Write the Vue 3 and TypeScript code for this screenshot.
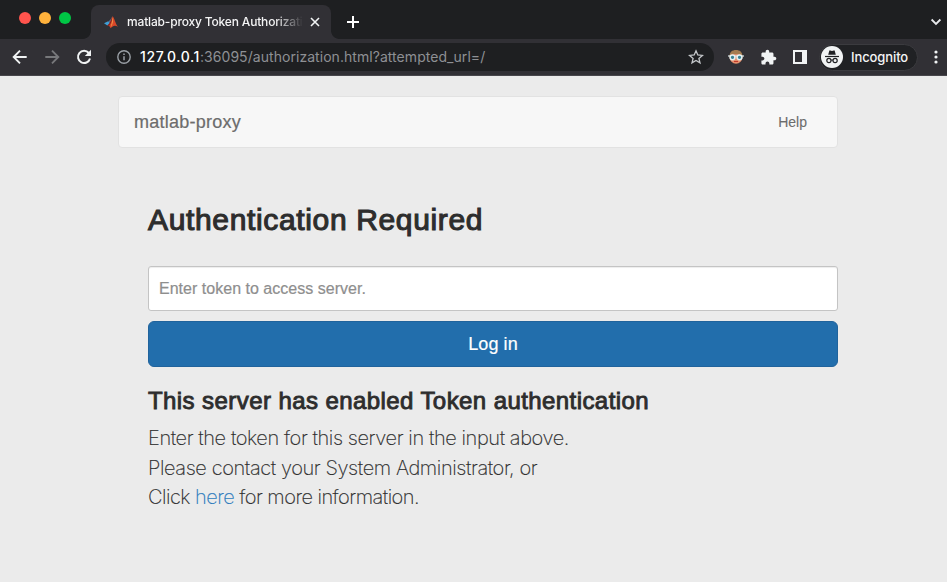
<script setup lang="ts">
import { ref } from 'vue'

const token = ref('')
const tabTitle = 'matlab-proxy Token Authorizati'
const lights = ['red', 'amber', 'green']
</script>

<template>
  <div class="window">
    <header class="tabs">
      <div class="lights">
        <i v-for="c in lights" :key="c" :class="c"></i>
      </div>
      <div class="tab">
        <svg class="logo" width="16" height="16" viewBox="0 0 16 16">
          <path d="M1 9.3 5.2 7.3 7 9.2 4.3 11.4Z" fill="#3f9fd6" />
          <path d="M5.2 7.3C7.4 6.8 7.6 4.5 9.5 2.3L7 9.2Z" fill="#4f6f9a" />
          <path d="M4.3 11.4C6.4 10.5 7.7 6 9.6 2.2 11.3 3.5 12.2 9.3 15 12.8 12 11 10 11.5 7.6 14.3 7 12.3 6 11.2 4.3 11.4Z" fill="#d9482a" />
          <path d="M9.6 2.2C9.4 4 8.6 9 6 12 5.500 11.500 5 11.300 4.3 11.4 7 10.2 8 5.5 9.6 2.2Z" fill="#7d2320" />
          <path d="M9.6 3C10.400 6 10 10 7.8 13.200 8.500 10 9.300 7 9.6 3Z" fill="#f5a04a" />
        </svg>
        <span class="tab-title">{{ tabTitle }}</span>
        <svg class="close" width="10" height="10" viewBox="0 0 10 10"><path d="M1 1 9 9M9 1 1 9" stroke="#f1f3f4" stroke-width="1.6" /></svg>
      </div>
      <svg class="plus" width="12" height="12" viewBox="0 0 12 12"><path d="M6 0V12M0 6H12" stroke="#fff" stroke-width="2" /></svg>
      <svg class="chevron" width="12" height="8" viewBox="0 0 12 8"><path d="M1.6 1.5 6 5.9 10.4 1.5" fill="none" stroke="#e8eaed" stroke-width="1.8" /></svg>
    </header>

    <nav class="toolbar">
      <svg class="back" width="16" height="16" viewBox="0 0 16 16"><path d="M14.7 8H2M8 1.7 1.7 8 8 14.3" fill="none" stroke="#f1f3f4" stroke-width="1.9" /></svg>
      <svg class="forward" width="16" height="16" viewBox="0 0 16 16"><path d="M1.3 8H14M8 1.7 14.3 8 8 14.3" fill="none" stroke="#77787b" stroke-width="1.9" /></svg>
      <svg class="reload" width="16" height="16" viewBox="0 0 16 16"><path d="M12.8 4A6.1 6.1 0 1 0 14 9.5" fill="none" stroke="#f1f3f4" stroke-width="2" /><path d="M15 0.8V7H8.8Z" fill="#f1f3f4" /></svg>
      <div class="address">
        <svg class="info" width="14" height="14" viewBox="0 0 14 14"><circle cx="7" cy="7" r="6.2" fill="none" stroke="#9aa0a6" stroke-width="1.4" /><path d="M7 6.2V10.3M7 3.5V5" stroke="#9aa0a6" stroke-width="1.5" /></svg>
        <span class="url"><b>127.0.0.1</b>:36095/authorization.html?attempted_url=/</span>
        <svg class="star" width="16" height="16" viewBox="0 0 16 16"><path d="M8 1.8 9.8 6 14.4 6.4 10.9 9.4 12 13.9 8 11.5 4 13.9 5.1 9.4 1.6 6.4 6.2 6Z" fill="none" stroke="#c4c7ca" stroke-width="1.3" /></svg>
      </div>
      <svg class="face" width="16" height="16" viewBox="0 0 16 16">
        <circle cx="8" cy="8.3" r="6.4" fill="#e58f6c" />
        <path d="M1.5 7.500C1.5 3 4.2 1 8 1S14.5 3 14.5 7.500L12.500 5.500 8 5 3.500 5.500Z" fill="#a47c50" />
        <path d="M0 7H16" stroke="#dce8ea" stroke-width="1.2" />
        <circle cx="4.5" cy="8.3" r="2.4" fill="#3a8292" stroke="#e3f1f3" stroke-width="1.5" />
        <circle cx="11.5" cy="8.3" r="2.4" fill="#3a8292" stroke="#e3f1f3" stroke-width="1.5" />
        <path d="M6 12.500H10" stroke="#c0392b" />
      </svg>
      <svg class="puzzle" width="17" height="17" viewBox="0 0 24 24"><path fill="#f1f3f4" d="M20.5 11H19V7c0-1.1-.9-2-2-2h-4V3.500C13 2.120 11.880 1 10.500 1S8 2.120 8 3.500V5H4c-1.100 0-1.990.900-1.990 2v3.800H3.500c1.490 0 2.700 1.210 2.700 2.700s-1.210 2.700-2.700 2.700H2V20c0 1.100.900 2 2 2h3.800v-1.500c0-1.490 1.210-2.700 2.700-2.700 1.490 0 2.700 1.210 2.700 2.700V22H17c1.100 0 2-.900 2-2v-4h1.500c1.380 0 2.500-1.120 2.500-2.500S21.880 11 20.500 11z" /></svg>
      <svg class="panel" width="14" height="14" viewBox="0 0 14 14"><path d="M0 0H14V14H0ZM2 2V12H9V2Z" fill="#f1f3f4" fill-rule="evenodd" /></svg>
      <div class="incognito">
        <svg width="22" height="22" viewBox="0 0 22 22">
          <circle cx="11" cy="11" r="11" fill="#f1f3f4" />
          <path d="M7.2 8.700 8.300 4.700Q8.500 4.200 9.200 4.400L11 4.900 12.800 4.400Q13.500 4.200 13.700 4.700L14.800 8.700Z" fill="#202124" />
          <path d="M4 10.500H18" stroke="#202124" stroke-width="1.200" />
          <g fill="none" stroke="#202124" stroke-width="1.200"><circle cx="7.900" cy="14.500" r="2.100" /><circle cx="14.100" cy="14.500" r="2.100" /><path d="M10 14.300Q11 13.700 12 14.300" /></g>
        </svg>
        <span>Incognito</span>
      </div>
      <svg class="dots" width="4" height="14" viewBox="0 0 4 14"><g fill="#f1f3f4"><circle cx="2" cy="2" r="1.600" /><circle cx="2" cy="7" r="1.600" /><circle cx="2" cy="12" r="1.600" /></g></svg>
    </nav>

    <main class="page">
      <div class="navbar">
        <span class="brand">matlab-proxy</span>
        <a class="help">Help</a>
      </div>
      <section class="content">
        <h1>Authentication Required</h1>
        <input v-model="token" type="text" placeholder="Enter token to access server." />
        <button type="button">Log in</button>
        <h3>This server has enabled Token authentication</h3>
        <div class="lead">
          <p>Enter the token for this server in the input above.</p>
          <p>Please contact your System Administrator, or</p>
          <p class="more">Click <a>here</a> for more information.</p>
        </div>
      </section>
    </main>
  </div>
</template>

<style>
body { background: #ebebeb; overflow: hidden; }
</style>

<style scoped>
* { box-sizing: border-box; }
svg { display: block; flex: none; }
.window { width: 947px; height: 582px; background: #ebebeb; display: flex; flex-direction: column; overflow: hidden; font-family: "Liberation Sans", Arial, sans-serif; white-space: nowrap; }
.tabs { height: 39px; flex: none; background: #1e1f21; display: flex; }
.lights { display: flex; gap: 8px; padding: 12px 0 0 19px; width: 91px; flex: none; }
.lights i { width: 12px; height: 12px; border-radius: 50%; }
.red { background: #ff544d; }
.amber { background: #ffb23c; }
.green { background: #00c645; }
.tab { position: relative; width: 240px; height: 34px; margin-top: 5px; background: #313035; border-radius: 8px 8px 0 0; display: flex; align-items: center; padding-left: 12px; flex: none; }
.tab::before, .tab::after { content: ""; position: absolute; bottom: 0; width: 8px; height: 8px; }
.tab::before { left: -8px; background: radial-gradient(circle at 0 0, transparent 7.5px, #313035 8.2px); }
.tab::after { right: -8px; background: radial-gradient(circle at 100% 0, transparent 7.5px, #313035 8.2px); }
.tab-title { margin-left: 8px; width: 176px; font: 500 12px/18px Inter, sans-serif; letter-spacing: -0.17px; color: #f4f4f5; -webkit-mask-image: linear-gradient(90deg, #000 148px, transparent 176px); mask-image: linear-gradient(90deg, #000 148px, transparent 176px); }
.close { margin-left: 7px; }
.plus { margin: 16px 0 0 16px; }
.chevron { margin: 18px 5px 0 auto; }
.toolbar { height: 37px; flex: none; background: #313035; border-bottom: 1px solid #47464b; display: flex; align-items: center; padding-left: 12px; }
.forward { margin-left: 16px; }
.reload { margin-left: 16px; }
.address { margin-left: 14px; width: 608px; height: 28px; border-radius: 14px; background: #1e1f21; display: flex; align-items: center; padding: 0 10px 0 11px; }
.url { margin-left: 9px; font: 400 14px/20px Inter, sans-serif; letter-spacing: 0.05px; color: #8e9094; }
.url b { font-weight: 500; letter-spacing: 0.6px; color: #fff; }
.star { margin-left: auto; }
.face { margin-left: 14px; }
.puzzle { margin-left: 16px; }
.panel { margin-left: 16px; }
.incognito { margin-left: 12px; width: 99px; height: 27px; border-radius: 14px; border: 1px solid #3b3b3f; background: #202124; display: flex; align-items: center; padding-left: 1px; }
.incognito span { margin-left: 8px; font: 500 13px/18px Inter, sans-serif; letter-spacing: -0.1px; color: #f4f4f5; }
.dots { margin-left: 16px; }
.page { width: 720px; margin: 20px 0 0 118px; }
.navbar { height: 52px; border: 1px solid #e2e2e2; border-radius: 4px; background: #f7f7f7; display: flex; align-items: center; justify-content: space-between; padding: 0 30px 0 15px; color: #6c6c6c; }
.brand { font-size: 18px; letter-spacing: 0.25px; -webkit-text-stroke: 0.2px #6c6c6c; }
.help { font-size: 14px; -webkit-text-stroke: 0.1px #6c6c6c; }
.content { padding: 51px 0 0 30px; color: #2d2d2d; display: flex; flex-direction: column; }
h1 { margin: 0; font-size: 30px; line-height: 41px; font-weight: 400; letter-spacing: 0.65px; -webkit-text-stroke: 1.1px #2d2d2d; }
input { margin-top: 26px; height: 45px; border: 1px solid #c4c4c4; border-radius: 3px; background: #fff; box-shadow: inset 0 1px 1px rgba(0,0,0,.075); padding: 0 10px; font: 16px "Liberation Sans", Arial, sans-serif; outline: none; }
input::placeholder { color: #8e8e8e; opacity: 1; letter-spacing: 0.02px; -webkit-text-stroke: 0.2px #8e8e8e; }
button { margin-top: 10px; height: 46px; border: 1px solid #20639c; border-radius: 6px; background: #226eac; color: #fff; font: 18px "Liberation Sans", Arial, sans-serif; letter-spacing: 0.1px; -webkit-text-stroke: 0.2px #fff; padding: 0; }
h3 { margin: 19px 0 0; font-size: 24px; line-height: 30px; font-weight: 400; letter-spacing: 0.42px; -webkit-text-stroke: 0.9px #2d2d2d; }
.lead { margin-top: 8px; font: 200 20px/29.5px Inter, sans-serif; letter-spacing: -0.41px; -webkit-text-stroke: 0.15px; }
.lead p { margin: 0; }
.lead .more { letter-spacing: -0.53px; }
.lead a { color: #2b7bbd; }
</style>
